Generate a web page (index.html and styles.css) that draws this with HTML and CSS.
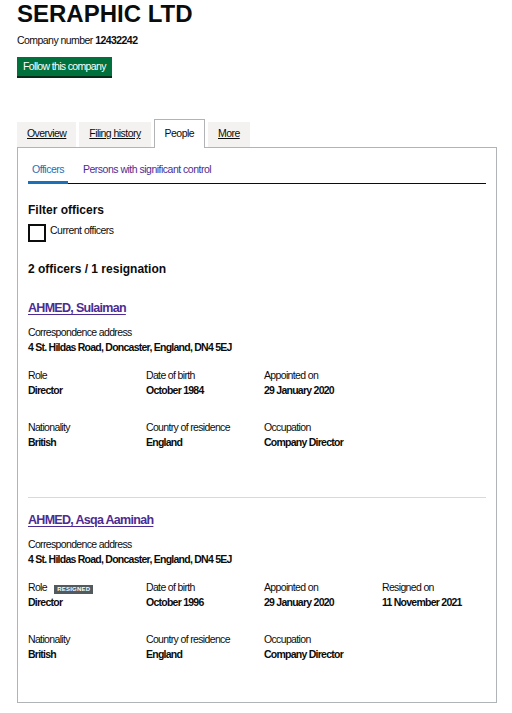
FILE: index.html
```html
<!DOCTYPE html>
<html lang="en">
<head>
<meta charset="utf-8">
<title>SERAPHIC LTD - People</title>
<link rel="stylesheet" href="styles.css">
</head>
<body>
<div class="page">
  <h1 class="company-name">SERAPHIC LTD</h1>
  <p class="company-number">Company number <strong>12432242</strong></p>
  <a class="follow-button" href="#">Follow this company</a>

  <ul class="tabs">
    <li class="tab"><a class="tab-link" href="#">Overview</a></li>
    <li class="tab"><a class="tab-link" href="#">Filing history</a></li>
    <li class="tab tab-active"><span class="tab-link">People</span></li>
    <li class="tab"><a class="tab-link" href="#">More</a></li>
  </ul>

  <div class="panel">
    <ul class="subtabs">
      <li class="subtab subtab-active"><a class="subtab-link" href="#">Officers</a></li>
      <li class="subtab"><a class="subtab-link subtab-visited" href="#">Persons with significant control</a></li>
    </ul>

    <h2 class="filter-title">Filter officers</h2>
    <div class="checkbox-row">
      <span class="checkbox"></span>
      <span class="checkbox-label">Current officers</span>
    </div>

    <h2 class="count-title">2 officers / 1 resignation</h2>

    <div class="officer">
      <h3 class="officer-name"><a href="#">AHMED, Sulaiman</a></h3>
      <dl class="field address">
        <dt class="label">Correspondence address</dt>
        <dd class="value">4 St. Hildas Road, Doncaster, England, DN4 5EJ</dd>
      </dl>
      <div class="field-row first-row">
        <dl class="field"><dt class="label">Role</dt><dd class="value">Director</dd></dl>
        <dl class="field"><dt class="label">Date of birth</dt><dd class="value">October 1984</dd></dl>
        <dl class="field"><dt class="label">Appointed on</dt><dd class="value">29 January 2020</dd></dl>
      </div>
      <div class="field-row">
        <dl class="field"><dt class="label">Nationality</dt><dd class="value">British</dd></dl>
        <dl class="field"><dt class="label">Country of residence</dt><dd class="value">England</dd></dl>
        <dl class="field"><dt class="label">Occupation</dt><dd class="value">Company Director</dd></dl>
      </div>
    </div>

    <div class="officer">
      <h3 class="officer-name"><a href="#">AHMED, Asqa Aaminah</a></h3>
      <dl class="field address">
        <dt class="label">Correspondence address</dt>
        <dd class="value">4 St. Hildas Road, Doncaster, England, DN4 5EJ</dd>
      </dl>
      <div class="field-row first-row">
        <dl class="field"><dt class="label">Role <span class="badge">Resigned</span></dt><dd class="value">Director</dd></dl>
        <dl class="field"><dt class="label">Date of birth</dt><dd class="value">October 1996</dd></dl>
        <dl class="field"><dt class="label">Appointed on</dt><dd class="value">29 January 2020</dd></dl>
        <dl class="field"><dt class="label">Resigned on</dt><dd class="value">11 November 2021</dd></dl>
      </div>
      <div class="field-row">
        <dl class="field"><dt class="label">Nationality</dt><dd class="value">British</dd></dl>
        <dl class="field"><dt class="label">Country of residence</dt><dd class="value">England</dd></dl>
        <dl class="field"><dt class="label">Occupation</dt><dd class="value">Company Director</dd></dl>
      </div>
    </div>
  </div>
</div>
</body>
</html>
```
FILE: styles.css
```css
* { box-sizing: border-box; }

body {
  margin: 0;
  background: #ffffff;
  color: #0b0c0c;
  font-family: "Liberation Sans", Arial, sans-serif;
  font-size: 10.5px;
  letter-spacing: -0.65px;
}

.page {
  width: 497px;
  padding-left: 17px;
}

.company-name {
  margin: 0;
  padding-top: 2px;
  font-size: 24px;
  line-height: 24px;
  font-weight: 700;
  letter-spacing: 0;
}

.company-number {
  margin: 7px 0 0;
  line-height: 14px;
  letter-spacing: -0.55px;
}

.company-number strong { font-weight: 700; }

.follow-button {
  display: block;
  width: fit-content;
  margin-top: 10px;
  padding: 0 6px;
  height: 19px;
  line-height: 19px;
  background: #00703c;
  color: #ffffff;
  text-decoration: none;
  box-shadow: 0 2px 0 #002d18;
}

.tabs {
  display: flex;
  align-items: flex-end;
  gap: 3px;
  margin: 43px 0 0;
  padding: 0;
  list-style: none;
}

.tab {
  background: #f3f2f1;
  padding: 4px 10px 7px;
  line-height: 14px;
  letter-spacing: -0.55px;
}

.tab-link {
  color: #0b0c0c;
  text-decoration: underline;
  text-underline-offset: 1px;
}

.tab-active {
  position: relative;
  z-index: 1;
  background: #ffffff;
  border: 1px solid #b1b4b6;
  border-bottom: 0;
  padding: 6px 10px 8px;
  margin-bottom: -1px;
}

.tab-active .tab-link { text-decoration: none; }

.panel {
  width: 480px;
  border: 1px solid #b1b4b6;
  padding: 10px 10px 10px;
}

.subtabs {
  display: flex;
  margin: 0;
  padding: 0;
  list-style: none;
  border-bottom: 1px solid #0b0c0c;
  letter-spacing: -0.5px;
}

.subtab {
  padding: 4px 4px 5px;
  margin-right: 11px;
  margin-bottom: -1px;
  line-height: 14px;
  border-bottom: 3px solid transparent;
}

.subtab-active { border-bottom-color: #1d70b8; }

.subtab-link {
  color: #1d70b8;
  text-decoration: none;
}

.subtab-visited { color: #4c2c92; }

.filter-title,
.count-title {
  margin: 20px 0 0;
  font-size: 12px;
  line-height: 13px;
  font-weight: 700;
  letter-spacing: 0;
}

.checkbox-row {
  display: flex;
  align-items: flex-start;
  margin-top: 7px;
}

.checkbox {
  width: 18px;
  height: 18px;
  border: 2px solid #0b0c0c;
  background: #ffffff;
  flex: none;
}

.checkbox-label {
  margin-left: 4px;
  line-height: 13px;
  letter-spacing: -0.5px;
}

.count-title {
  margin: 21px 0 10px;
}

.officer {
  padding: 14px 0 47px;
  border-bottom: 1px solid #d8d9da;
}

.officer:last-child {
  border-bottom: 0;
  padding-bottom: 30px;
}

.officer-name {
  margin: 0 0 9px;
  font-size: 12.5px;
  line-height: 16px;
  font-weight: 700;
  letter-spacing: -0.7px;
}

.officer-name a {
  color: #4c2c92;
  text-decoration: underline;
  text-underline-offset: 2px;
}

.field {
  margin: 0;
}

.label {
  line-height: 15px;
  font-weight: 400;
}

.value {
  margin: 0;
  line-height: 15px;
  font-weight: 700;
  letter-spacing: -0.75px;
}

.address { margin-bottom: 13px; }

.field-row {
  display: grid;
  grid-template-columns: repeat(4, 118px);
}

.first-row { margin-bottom: 22px; }

.badge {
  display: inline-block;
  margin-left: 5px;
  padding: 0 3px;
  height: 9px;
  line-height: 9px;
  background: #505a5f;
  color: #ffffff;
  font-size: 6px;
  font-weight: 700;
  letter-spacing: 0.2px;
  text-transform: uppercase;
}
```
